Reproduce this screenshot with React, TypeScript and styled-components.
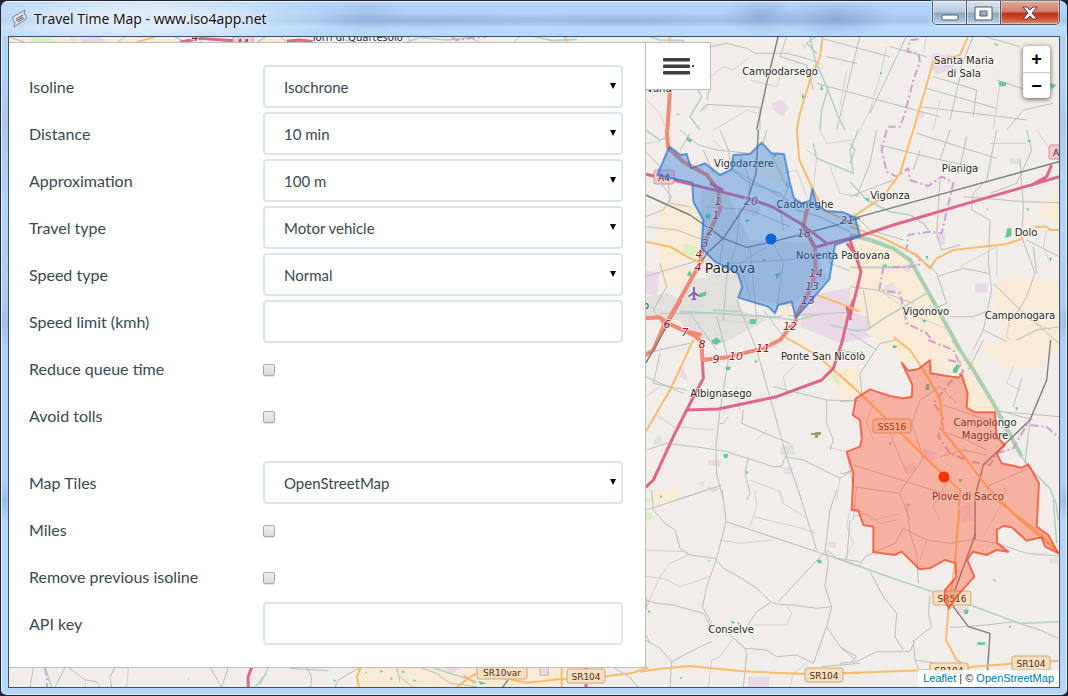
import React from 'react';
import styled, { createGlobalStyle, css } from 'styled-components';

const GlobalStyle = createGlobalStyle`
  *, *::before, *::after { box-sizing: border-box; }
  body { margin: 0; background: #1b2233; }
`;

/* ---------- window frame ---------- */

const Frame = styled.div`
  display: flex;
  flex-direction: column;
  min-height: 100vh;
  padding: 0 7px 7px;
  border: 1px solid #1d2738;
  border-bottom-width: 2px;
  border-radius: 8px 8px 7px 7px;
  background:
    linear-gradient(90deg, #f1f8ffcc 0 1px, transparent 1px calc(100% - 1px), #f1f8ffcc calc(100% - 1px)),
    linear-gradient(180deg, transparent 0 80px, #a8c2dc88 120px, #b4d4f6 200px, #a9c9ec88 300px, #8facc977 320px, #b0d2f8 350px 480px, #8daed388 500px, #b6d6f9 520px);
  background-color: #b3d3f5;
  box-shadow: inset 0 1px 0 #eef6ff, inset 0 -1px 0 #dcecff;
`;

const TitleBar = styled.header`
  display: flex;
  align-items: flex-start;
  height: 35px;
  margin: 0 -7px;
  padding: 0 7px 0 10px;
  border-radius: 7px 7px 0 0;
  background:
    radial-gradient(ellipse 190px 34px at 140px 18px, #e0ecf8ee 30%, #dceafa00 100%),
    radial-gradient(ellipse 50px 18px at 365px 16px, #7da0c855, #7da0c800),
    radial-gradient(ellipse 130px 9px at 430px 20px, #7598c055, #7598c000),
    radial-gradient(ellipse 160px 8px at 620px 20px, #7f9fc266, #7f9fc200),
    radial-gradient(ellipse 40px 18px at 760px 16px, #6d90bc77, #7595bf00),
    radial-gradient(ellipse 60px 18px at 835px 18px, #6d90bc88, #7595bf00),
    linear-gradient(180deg, #b2d5f9 0, #b0d2f6 12px, #a4c7ee 20px, #bcdcfc 26px, #b7d8fa 35px);
  box-shadow: inset 0 1px 0 #eef6ff;
`;

const AppIcon = styled.svg`
  width: 18px;
  height: 20px;
  margin: 8px 5px 0 0;
`;

const Title = styled.h1`
  flex: 1;
  margin: 8px 0 0;
  font: 400 14px/20px 'Open Sans', 'Noto Sans', sans-serif;
  color: #0a0a0a;
  text-shadow: 0 0 6px #fff;
`;

const Caption = styled.div`
  display: flex;
  height: 24px;
  border: 1px solid #46566c;
  border-top: 0;
  border-radius: 0 0 5px 5px;
  overflow: hidden;
  box-shadow: 0 0 0 1px #ffffff66;
`;

const CaptionButton = styled.button<{ $close?: boolean }>`
  display: grid;
  place-items: center;
  width: ${p => (p.$close ? 58 : 34)}px;
  padding: 0;
  border: 0;
  border-right: ${p => (p.$close ? 0 : '1px solid #46566c')};
  box-shadow: inset 0 0 0 1px #ffffff77;
  background: ${p =>
    p.$close
      ? 'linear-gradient(#e4a99a 0, #d17b69 11px, #b92d18 12px, #cf5237 18px, #e79470 24px)'
      : 'linear-gradient(#d8e4f1 0, #b9cadd 11px, #8fa7c1 12px, #a4bcd6 18px, #c7dcf0 24px)'};
`;

const Viewport = styled.main`
  position: relative;
  flex: 1;
  display: flex;
  align-items: flex-start;
  padding: 5px 0 19px;
  border: 1px solid #35537a;
  background: #f1eee9;
  overflow: hidden;
`;

/* ---------- settings panel ---------- */

const Panel = styled.form`
  position: relative;
  display: flex;
  flex-direction: column;
  gap: 4px;
  width: 637px;
  max-width: 90%;
  padding: 22px 22px 22px 20px;
  border: 1px solid #bcbcbc;
  border-left: 0;
  background: #fff;
  font: 400 16px/24px Lato, sans-serif;
  color: #3b4750;
`;

const Row = styled.div<{ $spaced?: boolean }>`
  display: flex;
  align-items: center;
  height: 43px;
  margin-top: ${p => (p.$spaced ? 20 : 0)}px;
`;

const Label = styled.label`
  flex: 0 0 234px;
`;

const box = css`
  width: 100%;
  height: 43px;
  border: 2px solid #dce4ec;
  border-radius: 4px;
  background: #fff;
  font: 400 15px/24px Lato, sans-serif;
  color: #3b4750;
  outline: none;
`;

const SelectWrap = styled.div`
  flex: 1;
  display: grid;
  align-items: center;
  > * { grid-area: 1 / 1; }
`;

const Select = styled.select`
  ${box}
  appearance: none;
  padding: 0 24px 0 19px;
`;

const Arrow = styled.svg`
  justify-self: end;
  width: 8px;
  height: 7px;
  margin-right: 6px;
  pointer-events: none;
`;

const TextInput = styled.input`
  ${box}
  flex: 1;
  padding: 0 19px;
`;

const Check = styled.input`
  appearance: none;
  width: 12px;
  height: 12px;
  margin: 2px 0 0;
  border: 1px solid #a9a9a9;
  border-radius: 2px;
  background: linear-gradient(#eee, #dcdcdc);
  box-shadow: 0 1px 0 #0000001a;
  &:checked { background: #5b7fa6; }
`;

const MenuButton = styled.button`
  position: relative;
  display: grid;
  place-items: center;
  width: 65px;
  height: 48px;
  padding: 0;
  border: 1px solid #bcbcbc;
  border-left: 0;
  background: #fff;
`;

/* ---------- map ---------- */

const MapSvg = styled.svg`
  position: absolute;
  inset: 0;
  width: 100%;
  height: 100%;
  path { vector-effect: non-scaling-stroke; }
`;

const MapText = styled.text<{ $size?: number }>`
  font: 400 ${p => p.$size ?? 10}px 'DejaVu Sans', sans-serif;
  fill: #1e1e1e;
  stroke: #ffffffaa;
  stroke-width: 2px;
  paint-order: stroke;
  text-anchor: middle;
`;

const ExitText = styled(MapText)`
  font-size: 11px;
  font-style: italic;
  fill: #8b1a2c;
`;

const ShieldText = styled(MapText)`
  font-size: 9px;
  fill: #4a2e16;
  stroke: none;
`;

const ZoomControl = styled.div`
  position: absolute;
  top: 9px;
  right: 9px;
  display: flex;
  flex-direction: column;
  border-radius: 4px;
  background: #fff;
  box-shadow: 0 1px 5px #000000a6;
`;

const ZoomButton = styled.button`
  width: 27px;
  height: 26px;
  padding: 0;
  border: 0;
  background: none;
  font: 700 18px/26px 'Liberation Sans', Arial, sans-serif;
  color: #000;
  & + & { border-top: 1px solid #ccc; line-height: 24px; }
`;

const Attribution = styled.footer`
  position: absolute;
  right: 0;
  bottom: 0;
  padding: 0 5px;
  background: #ffffffd8;
  font: 400 11px/17px 'Liberation Sans', Arial, sans-serif;
  color: #333;
  a { color: #0078a8; text-decoration: none; }
`;

type Kind =
  | 'motorway' | 'trunk' | 'primary' | 'minor' | 'track' | 'rail'
  | 'river' | 'canal' | 'border' | 'field' | 'industry' | 'town' | 'park' | 'meadow';

const strokes: Record<Kind, React.SVGProps<SVGPathElement>> = {
  motorway: { stroke: '#de6886', strokeWidth: 3 },
  trunk: { stroke: '#f58a74', strokeWidth: 4 },
  primary: { stroke: '#f9bc6c', strokeWidth: 2 },
  minor: { stroke: '#bebdb9', strokeWidth: 1 },
  track: { stroke: '#d3d1cc', strokeWidth: 1 },
  rail: { stroke: '#7d7d7d', strokeWidth: 1.4 },
  river: { stroke: '#a9d0b4', strokeWidth: 4 },
  canal: { stroke: '#b3d0ca', strokeWidth: 1.6 },
  border: { stroke: '#d29fd3', strokeWidth: 2, strokeDasharray: '8 3 2 3' },
  field: { fill: '#faebd7' },
  industry: { fill: '#e9d9e6' },
  town: { fill: '#e2e0dd' },
  park: { fill: '#62c99b' },
  meadow: { fill: '#dcefc2' },
};

type Sheet = { x: number; y: number; shapes: [Kind, string][] };

/* Each sheet is drawn at three units to the pixel from its own corner. */
const sheets: Sheet[] = [
  {
    x: 640, y: 130,
    shapes: [
      ['field', 'M60 220L150 215L190 270L185 390L60 400L50 310ZM60 400L150 410L130 480L60 470Z'],
      ['field', 'M210 480L300 450L310 500L240 540L190 520ZM350 110L420 80L430 150L370 150Z'],
      ['town', 'M185 180L260 190L330 330L520 340L560 450L450 530L300 500L200 450L180 350Z'],
      ['town', 'M150 450L290 430L300 540L380 570L250 640L150 620L110 560Z'],
      ['industry', 'M17 420L60 430L50 500L17 490ZM430 390L500 380L500 430L440 430ZM490 500L640 470L740 540L700 620L600 640L480 590ZM320 220L360 230L350 260L310 250Z'],
      ['town', 'M17 500L80 490L150 520L140 570L17 570Z'],
      ['minor', 'M17 65L60 110L45 140L95 200L70 240L17 260M85 160L90 220L150 230M17 290L110 300L190 330M120 0L175 45L230 60L330 70M240 0L265 60L275 115L420 200M380 0L370 40M150 10L120 60M190 60L220 130M395 75L440 170M300 80L330 150L325 210M17 440L80 420L180 390M190 270L250 330L240 395M60 400L80 470L40 540L60 570M300 230L290 340L260 440L250 570'],
      ['minor', 'M330 350L350 570M400 340L430 400L410 540M200 230L330 240L450 290M270 400L430 390L560 380M380 350L300 400L330 500M450 160L420 230L430 300M60 550L230 550L400 560L660 545M560 350L570 400L650 430'],
      ['track', 'M540 0L560 40L640 30M500 60L530 80L520 180M570 110L600 190L660 200M17 40L60 35M220 30L250 60M430 130L470 120L500 200'],
      ['canal', 'M17 0L60 30L85 20M520 40L530 85L640 130L630 60L655 0M270 115L330 160L420 190L470 240L540 260L660 320M220 540L300 545'],
      ['park', 'M140 22L156 30L152 38L140 30ZM198 252L212 252L210 266L196 264ZM405 432L424 428L410 448ZM150 420L156 440L140 436ZM175 492L200 484L196 498L180 502ZM316 268L330 270L320 278ZM400 72L412 76L402 82ZM440 150L446 175L438 165ZM370 385L380 390L368 396Z'],
      ['meadow', 'M150 225L160 232L150 245ZM210 465L225 470L215 480ZM220 470L240 462L230 480ZM130 340L175 350L160 380L130 370Z'],
    ],
  },
  {
    x: 640, y: 0,
    shapes: [
      ['industry', 'M395 310L425 300L445 320L430 350L400 330ZM185 320L210 315L195 335ZM880 160L930 165L945 205L890 225L870 200ZM480 130L500 135L495 150ZM835 335L855 335L850 355L835 350Z'],
      ['minor', 'M212 140L260 130L320 145L345 160L440 160L500 175L540 190M440 110L420 170L500 195L520 270M660 107L590 390M800 107L690 340M545 115L750 170M180 335L200 313L360 322L360 390M530 250L900 350M560 170L650 190M212 250L200 300'],
      ['minor', 'M750 140L820 160L860 170M880 230L1010 270L1000 350M860 265L1070 325M960 230L930 360M840 320L1160 360M1070 240L1160 270M1025 107L1140 140M1000 107L960 210M1240 310L1150 330L1100 390'],
      ['track', 'M212 230L250 200L280 210L330 170M220 390L290 350L320 330L350 340M430 200L410 260L330 240M620 210L600 320M740 140L720 230L690 330L660 390M860 107L850 160M1080 250L1060 390M900 300L880 390M20 300L60 340L80 390'],
      ['rail', 'M415 107L380 250L350 390'],
      ['canal', 'M510 110L525 180L560 260L595 350L615 390M565 260L545 330L540 390M20 107L60 120L130 122L150 150M170 265L185 290L150 350L180 390M530 107L500 130L530 160'],
      ['park', 'M1075 245L1098 246L1098 258L1080 260ZM1060 130L1075 132L1070 138ZM1230 250L1250 255L1235 268ZM720 215L728 220L720 224ZM486 280L494 290L486 298ZM545 255L550 270L540 270ZM112 338L120 346L112 344Z'],
      ['border', 'M835 118L810 120L803 155L835 160L840 185L820 240L795 340L780 380L745 380'],
      ['primary', 'M548 107L540 170L510 240L480 340L470 390M90 107L88 125M985 107L960 165L880 185L820 390'],
      ['trunk', 'M90 270L82 390'],
    ],
  },
  {
    x: 850, y: 130,
    shapes: [
      ['field', 'M0 300L120 350L200 400L230 480L330 660L160 700L0 560ZM440 460L500 440L580 450L630 470L630 660L440 660L460 580L430 520ZM570 220L600 200L627 190L627 280L560 260Z'],
      ['industry', 'M375 460L412 458L412 488L375 488ZM0 545L50 560L60 600L0 605ZM150 410L185 400L180 430ZM255 320L285 310L285 345L270 345Z'],
      ['town', 'M100 470L130 455L140 485L110 490ZM480 85L515 85L510 105L480 100Z'],
      ['minor', 'M90 45L250 85L390 115M200 10L440 85M300 0L270 90M210 60L190 120M350 20L330 110M440 0L410 150L370 190L365 240L420 270L415 400L425 480L400 600L370 660M20 200L60 100L80 0M0 200L130 150M510 90L520 230L515 320L555 430L530 500L500 550M530 0L545 60L500 160L420 190'],
      ['minor', 'M270 150L260 310L275 360L330 345M10 250L60 300L160 330M230 400L260 430L290 520L240 540M300 560L370 560L420 540M530 330L627 380M430 460L500 530L627 640M550 350L560 430M260 440L340 415L415 430M340 200L520 215L627 218M0 470L80 480L190 520M400 600L480 640L560 600L630 590M40 480L60 600M0 610L80 660'],
      ['track', 'M330 410L440 350L440 440M560 0L600 60L627 80M420 40L530 40M590 300L580 350L600 400M100 490L200 560L300 600M480 560L470 620L500 650M520 560L600 600'],
      ['canal', 'M0 155L50 210L120 245L180 255L220 280L235 300M0 40L15 60L0 100M0 412L150 412L200 405M230 490L110 560L50 600L0 600'],
      ['river', 'M0 315L60 330L130 355L180 390L240 495L330 660'],
      ['border', 'M110 0L95 60L110 125L140 140L175 115L180 150L235 168L275 140L310 158L275 310L240 305L175 315L170 360L210 385L205 410L100 412L88 480L150 490L170 580L230 610L260 650L330 680'],
      ['park', 'M472 295L484 295L484 318L465 324ZM42 205L58 205L56 214ZM226 378L234 378L232 390ZM530 30L542 30L540 40ZM528 235L536 235L536 245ZM408 236L414 236L414 242ZM597 385L605 382L603 395ZM215 570L230 570L224 578ZM95 405L112 403L108 412ZM125 648L140 648L132 656Z'],
      ['rail', 'M0 268L627 95'],
      ['primary', 'M190 0L150 130L100 200L10 260M0 290L100 325L200 375L240 415L260 385L310 360L470 342L520 325M555 290L590 290L600 300L627 300'],
      ['motorway', 'M0 328L130 285L380 212L560 160L627 140M545 165L590 140L605 105M-10 340L15 370L33 425L25 460L0 560'],
    ],
  },
  {
    x: 640, y: 300,
    shapes: [
      ['field', 'M580 210L660 200L650 290L580 280ZM40 580L110 560L120 600L50 600ZM350 150L385 150L375 180ZM420 20L470 20L430 60Z'],
      ['meadow', 'M560 190L590 210L600 260L580 240ZM17 590L40 600L20 610Z'],
      ['industry', 'M115 205L130 200L145 245L120 230ZM205 480L245 480L240 500L205 495ZM430 500L460 500L455 525L432 520ZM200 560L245 560L220 580ZM45 345L70 355L60 362Z'],
      ['town', 'M40 420L60 400L70 430L45 435ZM420 440L460 430L465 465L425 465ZM170 550L195 540L190 560Z'],
      ['minor', 'M290 0L350 150L440 470L485 600M230 50L265 180L240 330L228 440L230 520L250 600M370 30L430 110M17 160L100 140L150 130M60 160L40 250L140 270M20 450L80 430L200 445L260 455L400 500L425 500L435 470L490 480L600 535L632 515M110 600L245 555'],
      ['minor', 'M400 260L480 280L560 300L660 303M310 330L305 370L400 410L450 430M560 300L560 370L580 420L570 450M320 600L330 580L315 520L325 470M265 350L250 370L240 370M17 230L130 280M150 40L230 150'],
      ['track', 'M330 540L410 570L430 600M45 340L100 380L220 390M230 60L340 70M290 260L300 330M380 390L350 420M470 190L430 230L440 280M17 290L60 260M560 440L615 455M600 535L590 600'],
      ['canal', 'M120 35L230 40L370 50L470 60L550 40M570 75L660 95'],
      ['park', 'M328 58L350 58L348 72L330 72ZM214 122L230 112L244 124L230 135L216 130ZM256 200L272 200L270 210L258 210ZM345 180L355 184L345 190ZM250 462L264 462L262 474L252 474ZM55 583L62 583L60 592ZM90 575L98 575L96 582ZM318 512L326 516L320 524Z'],
      ['primary', 'M160 120L90 270L17 395M430 108L530 165L660 280'],
      ['motorway', 'M640 0L625 45L605 130L580 205L545 240L410 290L235 327L140 330M187 180L190 235L140 330L100 410L40 540L17 562'],
      ['trunk', 'M17 55L60 52L80 68L160 105L185 125L187 180L260 172L370 145L420 120L470 58M60 52L80 80L60 95M145 95L185 105M17 165L40 150L75 70L90 55'],
      ['rail', 'M125 0L17 190'],
    ],
  },
  {
    x: 840, y: 340,
    shapes: [
      ['field', 'M0 115L50 160L30 180L0 180ZM200 10L340 0L400 60L460 190L465 217L380 215L360 100L270 100L270 55L190 75L170 50ZM420 20L520 0L630 0L620 60L560 90L480 80Z'],
      ['industry', 'M190 380L225 365L230 390L200 405ZM250 325L290 340L280 365L245 345Z'],
      ['minor', 'M0 185L50 180M40 180L65 160L60 100L120 10L170 0M50 40L0 30M430 0L385 90M310 195L440 240L500 270M580 240L470 210M480 215L658 230M570 240L555 370M545 115L520 200M40 375L310 460M20 335L40 440L180 460L210 540M180 455L250 355L215 250L240 180M440 440L565 385M240 180L300 140L350 190M440 345L370 330L300 350M310 275L380 300L440 330M150 280L200 400M0 400L15 400L35 390M50 440L40 540'],
      ['track', 'M520 80L500 130L540 150M100 180L80 250L100 300M480 500L500 440M330 410L280 500L300 540'],
      ['river', 'M340 0L400 90L460 190L545 350'],
      ['canal', 'M545 350L570 385L630 445L648 490L655 540'],
      ['border', 'M265 0L340 30L370 95L340 115L280 190L310 230L295 290L330 340L390 365L450 375L470 340L520 325L560 255L620 260L658 295M325 60L370 70'],
      ['park', 'M340 85L352 72L360 78L350 100L338 98ZM258 132L268 132L268 150L256 150ZM525 202L535 202L530 212ZM160 14L172 18L166 24ZM148 305L156 312L148 316ZM355 418L370 418L360 428Z'],
      ['rail', 'M632 0L620 120L570 240L430 375L405 470L405 600'],
      ['primary', 'M160 -10L210 30L250 90L300 175L310 275L380 360L440 440L540 540L658 640M0 105L60 160L310 405L360 450L355 540'],
    ],
  },
  {
    x: 840, y: 500,
    shapes: [
      ['industry', 'M345 318L385 320L375 345L355 340ZM350 20L390 10L400 60L370 70Z'],
      ['town', 'M625 175L655 170L655 190L630 190Z'],
      ['minor', 'M60 195L75 170L165 130L190 85L260 120L330 130L400 118L470 130L560 160L655 168M0 490L50 485L110 455L210 455L225 420L275 380L265 340L270 285M90 215L130 290L170 340L165 410L190 450M330 383L440 375L520 365L600 390L655 415M225 480L240 520L235 560M220 420L225 480L290 490M0 440L50 470L30 490M200 20L210 100L230 160L235 250M30 60L20 180'],
      ['track', 'M170 60L120 70L80 40L40 50M55 30L100 60L180 40M480 20L430 110M260 120L240 180'],
      ['canal', 'M0 178L130 225L290 280L390 315L540 370L660 365M640 0L650 130'],
      ['park', 'M372 330L386 328L384 342L374 342ZM412 427L436 427L436 434L412 434ZM458 238L466 238L466 246ZM505 378L515 378L510 384ZM200 8L210 16L202 20Z'],
      ['rail', 'M405 100L400 120L345 270L340 320L385 380L450 400L442 515'],
      ['primary', 'M357 30L345 190L325 330L318 420L350 480L390 505M0 520L270 510L380 505L400 500L530 490L655 482M470 0L600 100L658 160'],
    ],
  },
  {
    x: 640, y: 490,
    shapes: [
      ['field', 'M35 0L110 0L115 25L45 50Z'],
      ['meadow', 'M17 70L35 65L40 85L20 95Z'],
      ['industry', 'M325 560L388 560L388 591L325 591ZM565 155L590 155L585 175L565 170ZM515 118L525 118L525 135Z'],
      ['minor', 'M200 0L50 50L17 60M35 0L40 60L75 100L105 120L120 175L150 195L225 205L250 235L300 262L350 295L395 338L415 343L460 345L530 355L575 350M247 0L258 95L230 205L200 290L188 350L215 400M258 95L530 185L660 230M475 0L530 180M590 0L570 60L555 185L415 335M390 338L350 365L320 410M558 185L565 215L555 290L575 350L560 410L520 520M560 410L600 470L645 510'],
      ['minor', 'M17 330L50 340L100 345L190 370L215 415M215 455L180 470L95 515L90 591M17 450L60 475L95 515M265 430L315 475L320 490L310 591M315 475L380 480L410 500L470 495L520 520M545 530L600 525L660 520M560 180L590 205L660 215'],
      ['track', 'M345 0L350 50L330 110M340 80L400 95L470 110L525 130M240 150L300 160L400 150M17 180L130 185L145 195M145 195L90 220L60 260L20 350M17 260L70 265L120 290L210 260M440 345L455 370L440 405L340 405M420 0L430 40L500 85M275 450L240 500L215 510L205 591M500 520L460 550L450 591M630 60L620 110L640 160L610 210'],
      ['park', 'M530 210L542 208L546 220L534 220ZM270 393L285 395L280 403ZM292 396L300 398L294 404ZM60 15L68 20L60 24ZM205 210L212 213L206 216ZM24 360L32 365L26 370ZM120 560L128 564L122 568Z'],
      ['primary', 'M0 545L60 536L150 528L300 543L400 548L500 552L660 548'],
    ],
  },
  {
    x: 0, y: 590,
    shapes: [
      ['field', 'M1080 232L1260 232L1260 292L1080 292Z'],
      ['minor', 'M100 232L90 292M195 232L165 292M205 232L255 270L290 275L300 292M345 232L330 262L335 292M630 232L665 292L685 232M780 285L805 232M920 232L935 262L932 292M1080 232L1015 270L1005 292M870 235L985 242'],
      ['track', 'M385 232L380 292M255 292L260 265'],
      ['border', 'M135 232L140 262L142 292'],
      ['canal', 'M138 240L155 292M765 292L800 250M1190 232L1205 292'],
      ['park', 'M562 265L566 265L566 270ZM1095 245L1102 247L1096 250ZM1000 268L1008 272L1002 276ZM1170 262L1180 266L1172 270ZM1140 240L1150 244L1142 248Z'],
      ['motorway', 'M755 232L744 262L745 292'],
      ['primary', 'M1082 232L1070 262L1078 292'],
    ],
  },
  {
    x: 400, y: 590,
    shapes: [
      ['field', 'M0 232L500 232L480 292L0 292Z'],
      ['industry', 'M420 232L445 232L445 256L420 256ZM130 232L190 232L150 252Z'],
      ['minor', 'M60 232L110 250L150 280L230 290M420 232L420 256L445 256L445 232M640 232L690 262L715 292M0 260L40 292M740 60L738 20M736 130L750 160'],
      ['canal', 'M95 232L150 250L230 275'],
      ['rail', 'M325 268L308 292'],
      ['park', 'M235 272L260 280L240 284ZM5 240L15 246L8 250ZM40 268L50 272L42 276Z'],
      ['primary', 'M170 292L205 265L230 250M190 255L225 280M300 262L380 278L480 268L610 260L700 248L745 232M485 232L485 292M465 268L505 268'],
      ['motorway', 'M558 232L558 240M558 282L558 292'],
    ],
  },
  {
    x: 0, y: 0,
    shapes: [
      ['field', 'M27 109L500 109L560 127L27 127ZM760 109L900 109L900 127L760 127Z'],
      ['meadow', 'M90 112L150 109L170 127L90 127ZM205 112L225 109L230 124L210 124Z'],
      ['industry', 'M240 115L300 109L320 127L250 127ZM700 109L750 109L750 127L700 127Z'],
      ['minor', 'M380 109L350 127M620 109L600 127M1000 109L1060 127M1225 109L1230 127M30 112L75 127M840 109L860 127M1400 109L1440 127M1560 109L1540 127'],
      ['canal', 'M520 109L560 127M770 127L800 109M1220 127L1260 112L1340 120L1420 112M1600 109L1660 122L1730 118'],
      ['border', 'M1355 112L1370 120L1400 116L1460 110'],
      ['primary', 'M410 127L470 109M1695 109L1700 127'],
      ['motorway', 'M540 127L600 115L700 122M860 124L900 120L940 125'],
    ],
  },
];

/* Roads and railways that run under the blue isochrone. */
const ringRoad: Sheet = {
  x: 640, y: 130,
  shapes: [
    ['primary', 'M470 0L478 90L520 180L550 240L660 290M17 335L90 350L150 385L190 400M530 495L600 520L660 545'],
    ['rail', 'M355 0L348 130L320 220L250 325L200 370L100 540M17 195L150 255L250 325L320 352L400 335L590 285L660 264'],
    ['trunk', 'M80 0L85 55L130 95L200 135L235 180L240 240L210 300L190 345L180 400L130 490L85 570M465 565L510 480L527 430L525 355L490 290L502 235'],
    ['motorway', 'M17 133L100 150L230 182L340 210L400 232L490 286L560 340M525 353L560 342L660 318M490 290L528 353M210 160L250 180M630 330L640 360L652 380M620 530L632 570'],
  ],
};

const BLUE_AREA =
  'M88 50L122 75L140 72L153 115L195 100L240 135L275 118L280 75L330 72L365 38L395 70L432 72L450 160L462 205L485 220L510 212L517 177L530 225L560 243L610 247L645 262L660 318L585 345L568 448L510 515L468 563L455 515L415 525L405 550L385 530L295 503L307 470L293 430L225 395L185 355L190 270L160 215L157 158L52 135Z';
const RED_AREA =
  'M185 68L205 92L235 87L270 60L272 100L355 113L365 103L383 160L380 203L405 217L465 217L470 290L495 315L470 340L485 370L545 383L565 373L597 430L590 560L625 585L655 640L615 620L605 592L560 602L515 562L490 558L470 570L472 610L505 635L470 630L440 645L398 635L382 660L403 710L350 770L327 805L313 780L315 750L348 712L347 670L315 660L270 685L238 688L185 635L165 645L100 637L100 560L70 555L55 512L35 510L40 400L20 335L60 320L65 295L60 240L38 225L48 175L90 148L150 168L190 175L215 170L217 135Z';

const places: [string, number, number, number?][] = [
  ['Torri di Quartesolo', 357, 41],
  ['Campodarsego', 780, 75],
  ['Santa Maria', 964, 64],
  ['di Sala', 964, 77],
  ['Rovana', 653, 92],
  ['Vigodarzere', 744, 167],
  ['Cadoneghe', 805, 208],
  ['Noventa Padovana', 843, 259],
  ['Padova', 730, 273, 14],
  ['Pianiga', 960, 172],
  ['Vigonza', 890, 199],
  ['Dolo', 1026, 236],
  ['Vigonovo', 926, 315],
  ['Camponogara', 1020, 319],
  ['Ponte San Nicolò', 823, 360],
  ['Albignasego', 721, 397],
  ['Campolongo', 985, 426],
  ['Maggiore', 985, 439],
  ['Piove di Sacco', 968, 500],
  ['Conselve', 731, 633],
  ['o', 646, 309],
];

const exits: [string, number, number][] = [
  ['4', 195, 41], ['20', 751, 205], ['1', 718, 205], ['1', 716, 219], ['2', 710, 235],
  ['3', 705, 247], ['4', 699, 258], ['4', 698, 271], ['18', 804, 237],
  ['21', 847, 224], ['14', 816, 277], ['13', 812, 290], ['13', 808, 304],
  ['12', 790, 330], ['11', 763, 352], ['10', 736, 360], ['9', 716, 363],
  ['8', 702, 348], ['7', 685, 336], ['6', 667, 328],
];

const shields: [string, number, number, number][] = [
  ['SS516', 892, 426, 38], ['SR516', 952, 598, 38], ['SR104', 824, 675, 38],
  ['SR104', 949, 670, 38], ['SR104', 1031, 663, 38], ['SR10var', 502, 672, 50],
  ['SR104', 586, 676, 38],
];

const Sheets = ({ items }: { items: Sheet[] }) => (
  <>
    {items.map((s, i) => (
      <g key={i} transform={`translate(${s.x} ${s.y}) scale(0.33333)`} fill="none" strokeLinejoin="round">
        {s.shapes.map(([kind, d], j) => (
          <path key={j} d={d} {...strokes[kind]} />
        ))}
      </g>
    ))}
  </>
);

const MapView = () => (
  <MapSvg role="img" aria-label="Map of Padova and surroundings">
    <g transform="translate(-9 -37)">
      <Sheets items={[...sheets, ringRoad]} />
      {shields.map(([t, x, y, w], i) => (
        <g key={i}>
          <rect x={x - w / 2} y={y - 7} width={w} height={14} rx={2} fill="#f7dfc0" stroke="#cfa67f" />
          <ShieldText x={x} y={y + 4}>{t}</ShieldText>
        </g>
      ))}
      {[[664, 177], [1059, 152], [243, 42]].map(([x, y]) => (
        <g key={x}>
          <rect x={x - 10} y={y - 7} width={20} height={14} rx={2} fill="#f4c9d2" stroke="#d88c9e" />
          <ShieldText x={x} y={y + 4}>A4</ShieldText>
        </g>
      ))}
      {exits.map(([t, x, y], i) => <ExitText key={i} x={x} y={y}>{t}</ExitText>)}
      {places.map(([t, x, y, size], i) => <MapText key={i} x={x} y={y} $size={size}>{t}</MapText>)}
      <path d="M693 287l2 0 0 5 5 4v1l-5-2v3l2 2h-6l2-2v-3l-5 2v-1l5-4z" fill="#8a5fc0" />
      <path d="M811 433h4v-1h6v3h-3v3h-3v-3h-4z" fill="#a39a72" />
      <g transform="translate(640 130) scale(0.33333)">
        <path d={BLUE_AREA} fill="#2b7bdc" fillOpacity={0.4} stroke="#2f74cf" strokeOpacity={0.7} strokeWidth={2} strokeLinejoin="round" />
      </g>
      <g transform="translate(840 340) scale(0.33333)">
        <path d={RED_AREA} fill="#ff5533" fillOpacity={0.4} stroke="#f4472e" strokeOpacity={0.75} strokeWidth={2} strokeLinejoin="round" />
      </g>
      <circle cx={771} cy={239} r={5.5} fill="#0b62d6" />
      <circle cx={944} cy={477} r={5.5} fill="#ff3300" />
    </g>
  </MapSvg>
);

/* ---------- form ---------- */

type Field =
  | { id: string; label: string; type: 'select'; options: string[]; spaced?: boolean }
  | { id: string; label: string; type: 'text' | 'check'; spaced?: boolean };

const fields: Field[] = [
  { id: 'isoline', label: 'Isoline', type: 'select', options: ['Isochrone'] },
  { id: 'distance', label: 'Distance', type: 'select', options: ['10 min'] },
  { id: 'approximation', label: 'Approximation', type: 'select', options: ['100 m'] },
  { id: 'travel', label: 'Travel type', type: 'select', options: ['Motor vehicle'] },
  { id: 'speed', label: 'Speed type', type: 'select', options: ['Normal'] },
  { id: 'limit', label: 'Speed limit (kmh)', type: 'text' },
  { id: 'queue', label: 'Reduce queue time', type: 'check' },
  { id: 'tolls', label: 'Avoid tolls', type: 'check' },
  { id: 'tiles', label: 'Map Tiles', type: 'select', options: ['OpenStreetMap'], spaced: true },
  { id: 'miles', label: 'Miles', type: 'check' },
  { id: 'remove', label: 'Remove previous isoline', type: 'check' },
  { id: 'key', label: 'API key', type: 'text' },
];

const FieldRow = ({ field }: { field: Field }) => (
  <Row $spaced={field.spaced}>
    <Label htmlFor={field.id}>{field.label}</Label>
    {field.type === 'select' && (
      <SelectWrap>
        <Select id={field.id}>
          {field.options.map(o => <option key={o}>{o}</option>)}
        </Select>
        <Arrow viewBox="0 0 8 7" aria-hidden="true"><path d="M1 0h6L4 6z" fill="#000" /></Arrow>
      </SelectWrap>
    )}
    {field.type === 'text' && <TextInput id={field.id} type="text" />}
    {field.type === 'check' && <Check id={field.id} type="checkbox" />}
  </Row>
);

export default function App() {
  return (
    <>
      <GlobalStyle />
      <Frame>
        <TitleBar>
          <AppIcon viewBox="0 0 18 20" fill="none" stroke="#7d868e" aria-hidden="true">
            <path d="M14 1L2 8V12L4 13L3 18L15 10V6L13 5Z" fill="#dfe6ea" />
            <path d="M5 10L12 6M5 12L12 8M7 13L13 9" stroke="#555d63" />
          </AppIcon>
          <Title>Travel Time Map - www.iso4app.net</Title>
          <Caption>
            <CaptionButton type="button" aria-label="Minimize">
              <svg width="18" height="18"><rect x="1" y="11" width="16" height="5" rx="1" fill="#fff" stroke="#4c5766" /></svg>
            </CaptionButton>
            <CaptionButton type="button" aria-label="Maximize">
              <svg width="19" height="16" stroke="#4c5766"><path d="M1 2h17v13H1zM6 6v5h7V6z" fill="#fff" fillRule="evenodd" /></svg>
            </CaptionButton>
            <CaptionButton type="button" $close aria-label="Close">
              <svg width="18" height="16"><path d="M2 2h4l3 3 3-3h4l-5 6 5 6h-4l-3-3-3 3H2l5-6z" fill="#fff" stroke="#5b3a3c" /></svg>
            </CaptionButton>
          </Caption>
        </TitleBar>
        <Viewport>
          <MapView />
          <Panel>
            {fields.map(f => <FieldRow key={f.id} field={f} />)}
          </Panel>
          <MenuButton type="button" aria-label="Toggle settings">
            <svg width="32" height="18" fill="#3d3d3d" aria-hidden="true">
              <rect x="1" y="1" width="27" height="3.6" rx="1" />
              <rect x="1" y="7.4" width="27" height="3.6" rx="1" />
              <rect x="1" y="14" width="27" height="3.6" rx="1" />
              <rect x="30" y="8" width="2" height="2" />
            </svg>
          </MenuButton>
          <ZoomControl>
            <ZoomButton type="button" aria-label="Zoom in">+</ZoomButton>
            <ZoomButton type="button" aria-label="Zoom out">−</ZoomButton>
          </ZoomControl>
          <Attribution>
            <a href="#leaflet">Leaflet</a> | © <a href="#osm">OpenStreetMap</a>
          </Attribution>
        </Viewport>
      </Frame>
    </>
  );
}
